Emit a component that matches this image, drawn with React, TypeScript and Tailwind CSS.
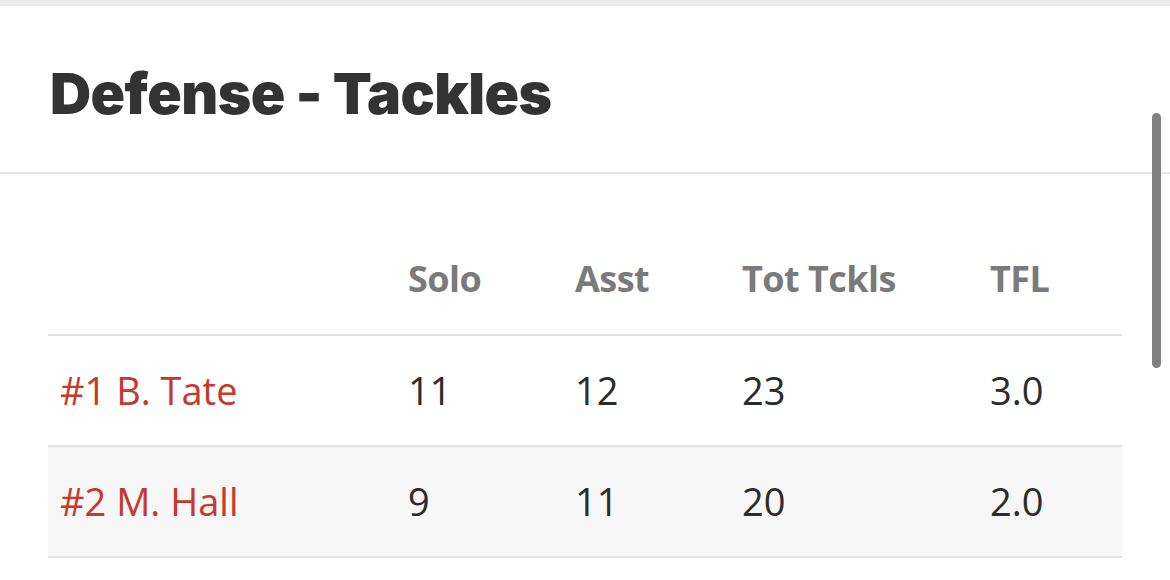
const rows = [
  { name: '#1 B. Tate', solo: '11', asst: '12', tot: '23', tfl: '3.0' },
  { name: '#2 M. Hall', solo: '9', asst: '11', tot: '20', tfl: '2.0' },
];

export default function App() {
  return (
    <div className="relative h-[580px] w-[1170px] overflow-hidden bg-white font-['Open_Sans',sans-serif]">
      <div className="h-[6px] bg-[#ebebeb]" />

      <div className="flex h-[168px] items-center border-b-2 border-[#e6e6e6] pl-[50px]">
        <h1 className="pt-[8px] font-['Inter',sans-serif] text-[57px] font-black leading-none tracking-[-0.01em] text-[#333333]">
          Defense - Tackles
        </h1>
      </div>

      <div className="pl-[48px] pr-[48px] pt-[50px]">
        <table className="w-full border-collapse text-left">
          <thead>
            <tr className="h-[111px] border-b-2 border-[#e2e2e2] text-[36px] font-bold tracking-[-0.015em] text-[#7a7a7a]">
              <th className="w-[348px] px-[12px]" />
              <th className="w-[167px] px-[12px] font-bold">Solo</th>
              <th className="w-[167px] px-[12px] font-bold">Asst</th>
              <th className="w-[248px] px-[12px] font-bold">Tot Tckls</th>
              <th className="px-[12px] font-bold">TFL</th>
            </tr>
          </thead>
          <tbody>
            {rows.map((r, i) => (
              <tr
                key={r.name}
                className={`h-[111px] border-b-2 border-[#e4e4e4] text-[38px] text-[#2b2b2b] ${i % 2 === 1 ? 'bg-[#f7f7f7]' : 'bg-white'}`}
              >
                <td className="px-[12px] text-[#c8382b]">{r.name}</td>
                <td className="px-[12px]">{r.solo}</td>
                <td className="px-[12px]">{r.asst}</td>
                <td className="px-[12px]">{r.tot}</td>
                <td className="px-[12px]">{r.tfl}</td>
              </tr>
            ))}
          </tbody>
        </table>
      </div>

      {/* scrollbar thumb */}
      <div className="absolute left-[1152px] top-[113px] h-[255px] w-[9px] rounded-full bg-[#808080]" />
    </div>
  );
}
